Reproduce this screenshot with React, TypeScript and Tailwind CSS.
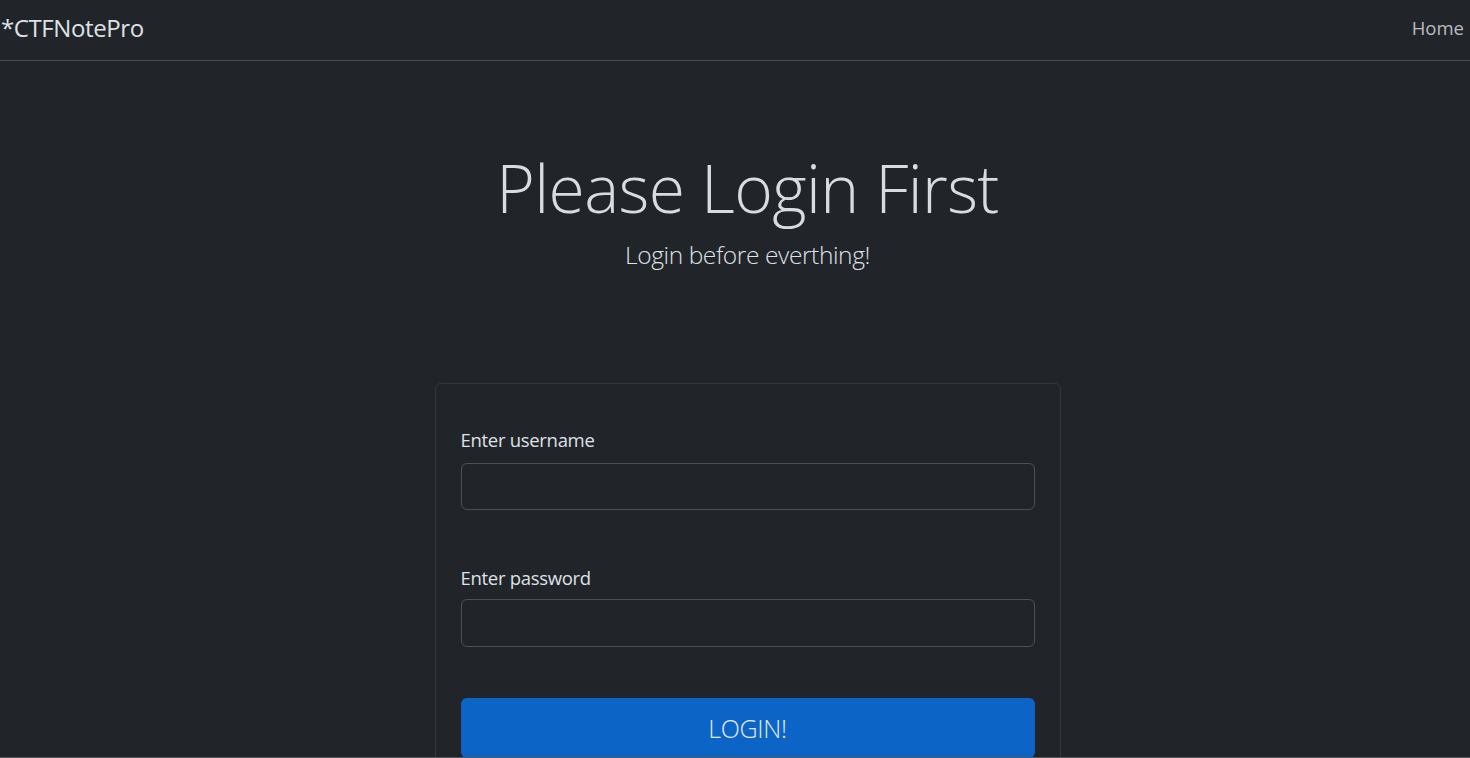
import { useState } from 'react';

export default function App() {
  const [username, setUsername] = useState('');
  const [password, setPassword] = useState('');

  return (
    <div
      className="h-[758px] overflow-hidden bg-[#212529] text-[#dee2e6] border-b border-[#55585c]"
      style={{ fontFamily: '"Open Sans", "Noto Sans", sans-serif' }}
    >
      {/* Навбар */}
      <nav className="h-[61px] flex items-center justify-between border-b border-[#4a4d51] pl-[1px] pr-[6px]">
        <span className="text-[24px] tracking-[-0.4px] text-[#dee2e6] pb-[4px]">*CTFNotePro</span>
        <a className="text-[18.5px] text-[#b9bcc0] pb-[4px]">Home</a>
      </nav>

      <main className="pl-[25px]">
        {/* Заголовок */}
        <header className="flex flex-col items-center pt-[83px]">
          <h1 className="text-[66px] leading-[86px] font-light tracking-[-0.6px] text-[#d9dcdf]">Please Login First</h1>
          <p className="text-[24.5px] font-light tracking-[-0.4px] mt-[7px]">Login before everthing!</p>
        </header>

        {/* Форма */}
        <div className="w-[626px] mx-auto mt-[109px] border border-[#33373b] rounded-[6px] px-[25px] pt-[42px] pb-[30px]">
          <label className="block text-[18.5px] tracking-[-0.3px] mb-[9px]">Enter username</label>
          <input
            value={username}
            onChange={(e) => setUsername(e.target.value)}
            className="block w-full h-[47px] bg-[#212529] border border-[#4b5056] rounded-[6px] px-3 outline-none"
          />
          <label className="block text-[18.5px] tracking-[-0.3px] mt-[54px] mb-[8px]">Enter password</label>
          <input
            type="password"
            value={password}
            onChange={(e) => setPassword(e.target.value)}
            className="block w-full h-[48px] bg-[#212529] border border-[#4b5056] rounded-[6px] px-3 outline-none"
          />
          <button className="mt-[51px] w-full h-[60px] bg-[#0c65c6] rounded-[6px] text-[25px] font-light text-[#e3e9f0] tracking-[-0.3px]">
            LOGIN!
          </button>
        </div>
      </main>
    </div>
  );
}
